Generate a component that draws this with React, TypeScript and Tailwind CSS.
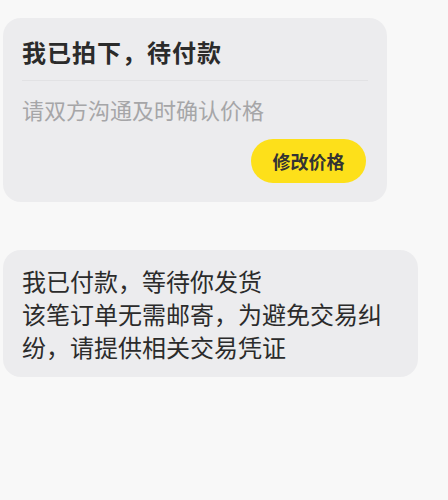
const font = { fontFamily: '"Noto Sans CJK SC", "Noto Sans", sans-serif' }

export default function App() {
  return (
    <div className="w-[448px] h-[500px] bg-[#f8f8f8] pt-[18px] pl-[3px]" style={font}>
      {/* Order status card */}
      <div className="w-[384px] h-[184px] rounded-[18px] bg-[#ececee] px-[19px] pt-[18px]">
        <div className="text-[24px] leading-[32px] font-semibold text-[#2b2b2b] tracking-[1px]">
          我已拍下，待付款
        </div>
        <div className="mt-[12px] h-px bg-[#e2e2e4]" />
        <div className="mt-[13px] text-[22px] leading-[30px] text-[#a6a6a8]">
          请双方沟通及时确认价格
        </div>
        <div className="mt-[15px] flex justify-end pr-[2px]">
          <button className="h-[44px] w-[115px] rounded-full bg-[#fde01a] text-[18px] font-bold text-[#333]">
            修改价格
          </button>
        </div>
      </div>

      {/* Payment message */}
      <div className="mt-[48px] w-[415px] h-[127px] rounded-[18px] bg-[#ececee] pl-[19px] pr-[30px] pt-[14px]">
        <p className="text-[24px] leading-[33px] text-[#2b2b2b]">
          我已付款，等待你发货
          <br />
          该笔订单无需邮寄，为避免交易纠纷，请提供相关交易凭证
        </p>
      </div>
    </div>
  )
}
